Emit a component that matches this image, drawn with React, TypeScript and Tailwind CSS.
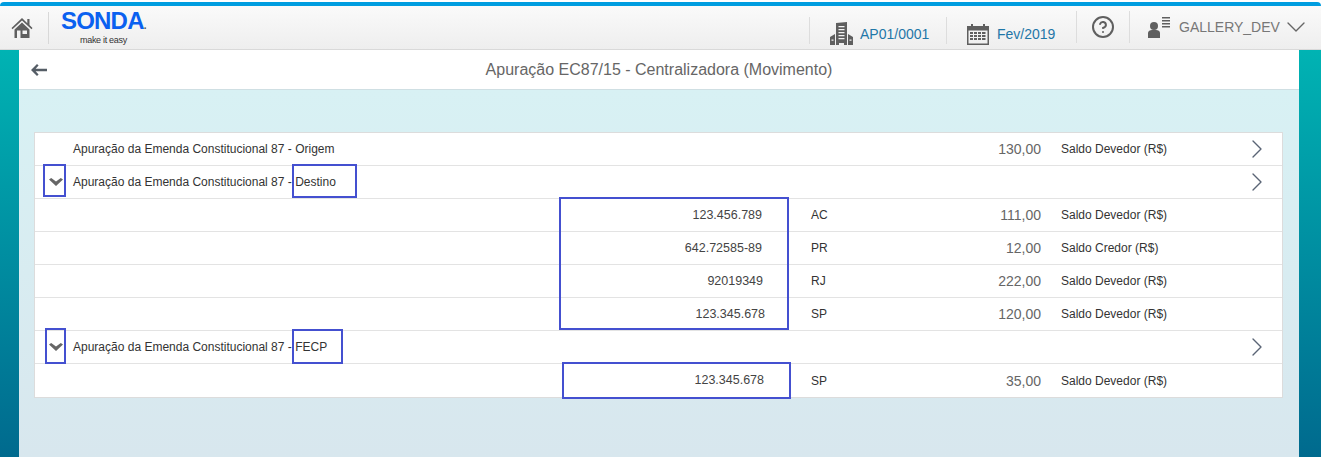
import { HelpCircle, ChevronRight, ChevronDown } from 'lucide-react'

const sans = "font-['Liberation_Sans',Arial,sans-serif]"

function HomeIcon() {
  return (
    <svg width="22" height="22" viewBox="0 0 22 22" className="text-[#5f5f5f]" fill="currentColor">
      <path d="M11 1 0.5 11l1 1.2L11 3.4l9.5 8.8 1-1.2-3-2.9V2h-2.2v4.2z" />
      <path fillRule="evenodd" d="M3.5 12.5 11 5.6l7.5 6.9V21H3.5zM6 13.5V21h3.5v-7.5zM11.5 13.5v3.5H16v-3.5z" />
    </svg>
  )
}

function BuildingIcon() {
  return (
    <svg width="23" height="23" viewBox="0 0 23 23" className="text-[#5f5f5f]" fill="currentColor">
      <path fillRule="evenodd" d="M6 1 17 0v23h-3v-2H9v2H6zM8.5 4v1.2h6V4zM8.5 7v1.2h6V7zM8.5 10v1.2h6V10zM8.5 13v1.2h6V13zM8.5 16v1.2h6V16z" />
      <path fillRule="evenodd" d="M0 15l5-3v11H0zM1.5 17.5v1.3h2v-1.3z" />
      <path fillRule="evenodd" d="M18 12l5 3v8h-5zM19.5 17.5v1.3h2v-1.3z" />
    </svg>
  )
}

function CalendarIcon() {
  return (
    <svg width="22" height="22" viewBox="0 0 22 22" className="text-[#5f5f5f]" fill="currentColor">
      <path fillRule="evenodd" d="M0 3h4V1h2v2h10V1h2v2h4v19H0zM1.5 7.5V20.5h19V7.5z" />
      <path d="M3 9h3v2H3zM7 9h3v2H7zM11 9h3v2h-3zM15 9h3.5v2H15zM3 12h3v2H3zM7 12h3v2H7zM15 12h3.5v2H15zM3 15h3v2H3zM7 15h3v2H7zM11 15h3v2h-3zM15 15h3.5v2H15zM11 12h3v2h-3z" />
    </svg>
  )
}

function UserListIcon() {
  return (
    <svg width="24" height="24" viewBox="0 0 24 24" className="text-[#5f5f5f]" fill="currentColor">
      <circle cx="7" cy="11" r="4" />
      <path d="M1 23v-5c0-2 2-3 4-3h4c2 0 4 1 4 3v5z" />
      <path d="M15 2h8v1.5h-8zM15 5h8v1.5h-8zM15 8h8v1.5h-8zM15 11h8v1.5h-8z" />
    </svg>
  )
}

function ToggleIcon() {
  return (
    <svg width="14" height="8" viewBox="0 0 14 8" className="text-[#666666]" fill="currentColor">
      <path d="M0 1.5 2.2 0 7 3.4 11.8 0 14 1.5 7 8z" />
    </svg>
  )
}

type Row = {
  title?: string
  toggle?: boolean
  doc?: string
  docPad?: string
  uf?: string
  value?: string
  unit?: string
  arrow?: boolean
}

const rows: Row[] = [
  { title: 'Apuração da Emenda Constitucional 87 - Origem', value: '130,00', unit: 'Saldo Devedor (R$)', arrow: true },
  { title: 'Apuração da Emenda Constitucional 87 - Destino', toggle: true, arrow: true },
  { doc: '123.456.789', docPad: 'pr-[1px]', uf: 'AC', value: '111,00', unit: 'Saldo Devedor (R$)' },
  { doc: '642.72585-89', docPad: 'pr-[1px]', uf: 'PR', value: '12,00', unit: 'Saldo Credor (R$)' },
  { doc: '92019349', docPad: 'pr-0', uf: 'RJ', value: '222,00', unit: 'Saldo Devedor (R$)' },
  { doc: '123.345.678', docPad: 'pl-[2px] -mr-[2px]', uf: 'SP', value: '120,00', unit: 'Saldo Devedor (R$)' },
  { title: 'Apuração da Emenda Constitucional 87 - FECP', toggle: true, arrow: true },
  { doc: '123.345.678', docPad: 'pl-[1px] -mr-[1px]', uf: 'SP', value: '35,00', unit: 'Saldo Devedor (R$)' },
]

function TableRow({ row, last }: { row: Row; last: boolean }) {
  return (
    <div className={`flex h-[33px] items-center text-xs text-[#333333] ${last ? '' : 'border-b border-[#e3e3e3]'}`}>
      <div className="flex w-[38px] justify-center pl-[3px]">
        {row.toggle && <ToggleIcon />}
      </div>
      <div className="flex w-[690px] items-center justify-between">
        <span>{row.title}</span>
        {row.doc && <span className={`text-[12.5px] text-[#444444] ${row.docPad}`}>{row.doc}</span>}
      </div>
      <div className="ml-[48px] flex w-[230px] items-center justify-between">
        <span>{row.uf}</span>
        {row.value && <span className="text-sm text-[#666666]">{row.value}</span>}
      </div>
      <div className="ml-[20px] flex-1">{row.unit}</div>
      <div className="flex w-[41px] justify-start">
        {row.arrow && <ChevronRight size={32} strokeWidth={1} className="text-[#5a6475]" />}
      </div>
    </div>
  )
}

export default function App() {
  return (
    <div className={`${sans} relative h-[457px] w-[1321px] overflow-hidden bg-white`}>
      {/* moldura colorida */}
      <div className="mt-[2px] flex h-[455px] flex-col">
        <div className="h-[4px] rounded-t-md bg-[#009de0]" />
        <header className="flex h-[44px] items-center border-b border-[#d9d9d9] bg-gradient-to-b from-[#fafafa] to-[#eeeeee]">
          <div className="flex h-[32px] w-[49px] items-center justify-center border-r border-[#d8d8d8] pr-[5px]">
            <HomeIcon />
          </div>
          <div className="mt-[3px] ml-[12px] flex w-[90px] flex-col items-start leading-none">
            <span className="text-[24px] leading-[17px] font-bold tracking-[-0.8px] text-[#0a60f0]">
              SONDA<span className="text-[10px] text-[#555555]">.</span>
            </span>
            <span className="ml-[19px] text-[9px] leading-[12px] tracking-[-0.3px] text-[#333333]">make it easy</span>
          </div>
          <div className="ml-auto flex h-full items-center text-[#1f77a8]">
            <div className="mt-[6px] flex h-[27px] w-[137px] items-center gap-[7px] border-l border-[#dddddd] pt-[6px] pl-[20px]">
              <BuildingIcon />
              <span className="text-sm">AP01/0001</span>
            </div>
            <div className="mt-[6px] flex h-[27px] w-[130px] items-center gap-[8px] border-l border-[#dddddd] pt-[6px] pl-[20px]">
              <CalendarIcon />
              <span className="text-sm">Fev/2019</span>
            </div>
            <div className="mb-[2px] flex h-[32px] w-[53px] items-center justify-center border-l border-[#dddddd]">
              <HelpCircle size={24} strokeWidth={2} className="text-[#5f5f5f]" />
            </div>
            <div className="mb-[2px] flex h-[32px] w-[192px] items-center border-l border-[#dddddd] pl-[17px] text-[#777777]">
              <UserListIcon />
              <span className="ml-[8px] text-sm">GALLERY_DEV</span>
              <ChevronDown size={32} strokeWidth={1} className="text-[#666666]" />
            </div>
          </div>
        </header>
        <div className="flex flex-1 bg-gradient-to-b from-[#00b3b3] to-[#006a8e]">
          <div className="mx-[19px] mr-[22px] flex flex-1 flex-col">
            <div className="flex h-[40px] items-center border-b border-[#cfdfe3] bg-white">
              <div className="flex w-[40px] justify-center">
                <svg width="18" height="14" viewBox="0 0 18 14" className="text-[#555d66]" fill="currentColor">
                  <path d="M7 1 1 7l6 6 1.6-1.6L5.6 8.3H17V5.7H5.6l3-3.1z" />
                </svg>
              </div>
              <h1 className="flex-1 pr-[40px] text-center text-base font-normal text-[#666666]">
                Apuração EC87/15 - Centralizadora (Movimento)
              </h1>
            </div>
            <div className="flex-1 bg-gradient-to-b from-[#d8f1f4] to-[#d8e7ee] pt-[42px] pr-[16px] pl-[15px]">
              <div className="border border-[#dcdcdc] bg-white">
                {rows.map((row, i) => (
                  <TableRow key={i} row={row} last={i === rows.length - 1} />
                ))}
              </div>
            </div>
          </div>
        </div>
      </div>

      {/* marcações azuis feitas sobre a captura */}
      <div className="absolute top-[164px] left-[43px] h-[33px] w-[23px] border-2 border-[#4450d0]" />
      <div className="absolute top-[164px] left-[292px] h-[34px] w-[65px] border-2 border-[#4450d0]" />
      <div className="absolute top-[197px] left-[559px] h-[133px] w-[230px] border-2 border-[#4450d0]" />
      <div className="absolute top-[328px] left-[45px] h-[36px] w-[21px] border-2 border-[#4450d0]" />
      <div className="absolute top-[329px] left-[292px] h-[35px] w-[51px] border-2 border-[#4450d0]" />
      <div className="absolute top-[362px] left-[562px] h-[37px] w-[229px] border-2 border-[#4450d0]" />
    </div>
  )
}
